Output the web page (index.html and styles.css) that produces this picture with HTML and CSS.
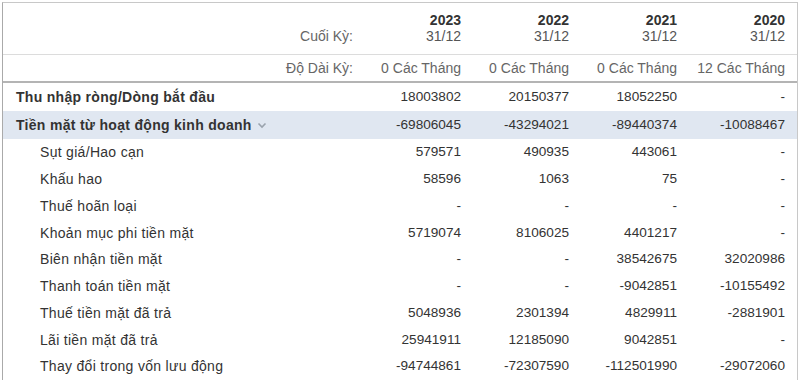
FILE: index.html
```html
<!DOCTYPE html>
<html lang="vi">
<head>
<meta charset="utf-8">
<link rel="stylesheet" href="styles.css">
</head>
<body>
<div class="panel">
<table class="fin">
  <colgroup><col class="c-label"><col class="c-num"><col class="c-num"><col class="c-num"><col class="c-num"></colgroup>
  <thead>
    <tr class="h-period">
      <th class="lbl"><span class="lbl-txt">Cuối Kỳ:</span></th>
      <th><span class="yr">2023</span><span class="dt">31/12</span></th>
      <th><span class="yr">2022</span><span class="dt">31/12</span></th>
      <th><span class="yr">2021</span><span class="dt">31/12</span></th>
      <th><span class="yr">2020</span><span class="dt">31/12</span></th>
    </tr>
    <tr class="h-len">
      <th class="lbl">Độ Dài Kỳ:</th>
      <th>0 Các Tháng</th>
      <th>0 Các Tháng</th>
      <th>0 Các Tháng</th>
      <th>12 Các Tháng</th>
    </tr>
  </thead>
  <tbody>
    <tr class="major">
      <td class="name">Thu nhập ròng/Dòng bắt đầu</td>
      <td>18003802</td><td>20150377</td><td>18052250</td><td>-</td>
    </tr>
    <tr class="major section">
      <td class="name">Tiền mặt từ hoạt động kinh doanh <svg class="chev" width="10" height="7" viewBox="0 0 10 7"><path d="M1.5 1.5 L5 5 L8.5 1.5" fill="none" stroke="#9aa3ad" stroke-width="1.6"/></svg></td>
      <td>-69806045</td><td>-43294021</td><td>-89440374</td><td>-10088467</td>
    </tr>
    <tr class="sub"><td class="name">Sụt giá/Hao cạn</td><td>579571</td><td>490935</td><td>443061</td><td>-</td></tr>
    <tr class="sub"><td class="name">Khấu hao</td><td>58596</td><td>1063</td><td>75</td><td>-</td></tr>
    <tr class="sub"><td class="name">Thuế hoãn loại</td><td>-</td><td>-</td><td>-</td><td>-</td></tr>
    <tr class="sub"><td class="name">Khoản mục phi tiền mặt</td><td>5719074</td><td>8106025</td><td>4401217</td><td>-</td></tr>
    <tr class="sub"><td class="name">Biên nhận tiền mặt</td><td>-</td><td>-</td><td>38542675</td><td>32020986</td></tr>
    <tr class="sub"><td class="name">Thanh toán tiền mặt</td><td>-</td><td>-</td><td>-9042851</td><td>-10155492</td></tr>
    <tr class="sub"><td class="name">Thuế tiền mặt đã trả</td><td>5048936</td><td>2301394</td><td>4829911</td><td>-2881901</td></tr>
    <tr class="sub"><td class="name">Lãi tiền mặt đã trả</td><td>25941911</td><td>12185090</td><td>9042851</td><td>-</td></tr>
    <tr class="sub"><td class="name">Thay đổi trong vốn lưu động</td><td>-94744861</td><td>-72307590</td><td>-112501990</td><td>-29072060</td></tr>
  </tbody>
</table>
</div>
</body>
</html>
```

FILE: styles.css
```css
html, body {
  margin: 0;
  padding: 0;
  background: #fff;
  overflow: hidden;
}
body {
  font-family: "Liberation Sans", Arial, sans-serif;
  font-size: 14px;
  color: #333;
}
.panel {
  margin: 2px 0 0 2px;
  width: 794px;
  height: 377px;
  overflow: hidden;
  border-top: 1px solid #c8c8c8;
  border-left: 1px solid #aaa;
  border-right: 1px solid #c8c8c8;
}
.fin {
  width: 100%;
  border-collapse: collapse;
  table-layout: fixed;
}
.c-label { width: 362px; }
.c-num { width: 108px; }
.fin th, .fin td {
  padding: 0 12px 0 0;
  text-align: right;
  white-space: nowrap;
  font-weight: normal;
  line-height: 16px;
}
.fin td:not(.name) { font-size: 13.6px; }
.h-period th {
  height: 42px;
  padding-top: 9px;
  border-bottom: 1px solid #dcdcdc;
  vertical-align: top;
  color: #555;
}
.lbl-txt {
  display: block;
  padding-top: 16px;
  color: #666;
}
.yr {
  display: block;
  font-weight: bold;
  color: #333;
}
.dt {
  display: block;
}
.h-len th {
  height: 26px;
  color: #666;
  border-bottom: 2px solid #b4b4b4;
}
.fin td.name {
  text-align: left;
  padding-left: 13px;
  letter-spacing: 0.3px;
}
.major td {
  height: 28px;
  font-weight: bold;
}
.major td:not(.name) { font-weight: normal; }
.section td {
  background: #e0e7f1;
}
.chev {
  vertical-align: middle;
  margin-left: 1px;
  position: relative;
  top: -1px;
}
.sub td {
  height: 26.75px;
}
.sub td.name {
  padding-left: 37px;
}
```
